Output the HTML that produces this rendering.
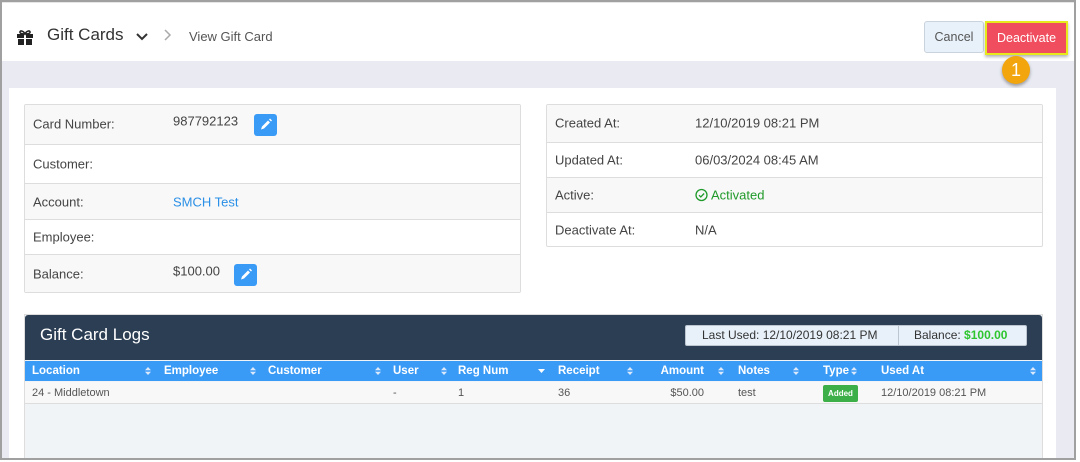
<!DOCTYPE html>
<html><head><meta charset="utf-8"><style>
*{box-sizing:border-box;margin:0;padding:0}
body{width:1080px;height:462px;overflow:hidden;background:#fff;font-family:"Liberation Sans",sans-serif;font-size:13px;color:#444;position:relative}
.frame{position:absolute;left:0;top:0;width:1076px;height:460px;border:2px solid #a0a0a0;background:#e9eaf2;overflow:hidden}
.hdr{position:absolute;left:0;top:0;width:1072px;height:59px;background:#fff;border-top:1px solid #e6e6e6}
.abs{position:absolute}
.panel{position:absolute;left:7px;top:86px;width:1047px;height:380px;background:#fff}
.tbl{position:absolute;border:1px solid #ddd;border-radius:2px;overflow:hidden}
.row{position:absolute;left:0;right:0;border-top:1px solid #ddd}
.row span{position:absolute;top:50%;transform:translateY(-50%)}
.th{position:absolute;top:0;height:20px;line-height:20px;color:#fff;font-weight:bold;font-size:11.5px}
.si{position:absolute;top:6px}
.td{position:absolute;top:0;height:22px;line-height:22px;font-size:11px;color:#555}
.pen{position:absolute;width:23px;height:22px;background:#3a9bf6;border-radius:3px}
</style></head><body>
<div class="frame">
<div class="hdr">
 <svg class="abs" style="left:14px;top:26px" width="18" height="16" viewBox="0 0 18 16"><rect x="1" y="5" width="16" height="4" fill="#222"/><rect x="2" y="10" width="14" height="6" fill="#222"/><rect x="8" y="5" width="2" height="11" fill="#fff"/><path d="M9 5C7 1 3.5 1.5 4 3.5 4.5 5 8 5 9 5 10 5 13.5 5 14 3.5 14.5 1.5 11 1 9 5Z" fill="none" stroke="#222" stroke-width="1.6"/></svg>
 <div class="abs" style="left:45px;top:22px;font-size:17px;color:#333">Gift Cards</div>
 <svg class="abs" style="left:134px;top:30px" width="12" height="8"><path d="M1 1l5 5 5-5" fill="none" stroke="#333" stroke-width="2"/></svg>
 <svg class="abs" style="left:162px;top:26px" width="8" height="12"><path d="M1 1l5 5-5 5" fill="none" stroke="#aaa" stroke-width="1.5"/></svg>
 <div class="abs" style="left:187px;top:26px;font-size:13px;color:#555">View Gift Card</div>
 <div class="abs" style="left:922px;top:18px;width:60px;height:32px;border:1px solid #c9d3dd;background:#e8f1fa;border-radius:3px;line-height:30px;text-align:center;color:#555;font-size:12.5px">Cancel</div>
 <div class="abs" style="left:983px;top:18px;width:83px;height:34px;border:2px solid #e6ea1c;background:#f04d5e;line-height:30px;text-align:center;color:#fff;font-size:12.5px;box-shadow:0 2px 3px rgba(0,0,0,.3)">Deactivate</div>
</div>
<div class="abs" style="left:1000px;top:54px;width:28px;height:28px;border-radius:50%;background:#f2a50c;color:#fff;font-size:18px;text-align:center;line-height:28px;box-shadow:0 2px 3px rgba(0,0,0,.35)">1</div>
<div class="panel"></div>
<div class="tbl" style="left:22px;top:102px;width:497px;height:189px">
 <div class="row" style="top:-1px;height:40px;background:#f8f8f8;border-top:none"><span style="left:8px">Card Number:</span><span style="left:148px;transform:translateY(-70%)">987792123</span><div class="pen" style="left:229px;top:10px"><svg width="23" height="22"><path d="M7 15.5l1-3 6-6 2 2-6 6z M15 5.5l1-1 2 2-1 1z" fill="#fff"/></svg></div></div>
 <div class="row" style="top:39px;height:39px"><span style="left:8px">Customer:</span></div>
 <div class="row" style="top:78px;height:36px;background:#f8f8f8"><span style="left:8px">Account:</span><span style="left:148px;color:#2a8fe6">SMCH Test</span></div>
 <div class="row" style="top:114px;height:35px"><span style="left:8px">Employee:</span></div>
 <div class="row" style="top:149px;height:38px;background:#f8f8f8"><span style="left:8px">Balance:</span><span style="left:148px;transform:translateY(-70%)">$100.00</span><div class="pen" style="left:209px;top:9px"><svg width="23" height="22"><path d="M7 15.5l1-3 6-6 2 2-6 6z M15 5.5l1-1 2 2-1 1z" fill="#fff"/></svg></div></div>
</div>
<div class="tbl" style="left:544px;top:102px;width:497px;height:143px">
 <div class="row" style="top:-1px;height:38px;background:#f8f8f8;border-top:none"><span style="left:8px">Created At:</span><span style="left:148px">12/10/2019 08:21 PM</span></div>
 <div class="row" style="top:37px;height:35px"><span style="left:8px">Updated At:</span><span style="left:148px">06/03/2024 08:45 AM</span></div>
 <div class="row" style="top:72px;height:35px;background:#f8f8f8"><span style="left:8px">Active:</span><span style="left:148px;height:13px"><svg width="13" height="13"><circle cx="6.5" cy="6.5" r="5.5" fill="none" stroke="#1f9a2a" stroke-width="1.3"/><path d="M4 6.7l1.8 1.8 3.3-3.5" fill="none" stroke="#1f9a2a" stroke-width="1.3"/></svg></span><span style="left:164px;color:#1f9a2a">Activated</span></div>
 <div class="row" style="top:107px;height:35px"><span style="left:8px">Deactivate At:</span><span style="left:148px">N/A</span></div>
</div>
<div class="abs" style="left:22px;top:312px;width:1019px;height:150px;background:#f1f4f7;border:1px solid #ddd">
 <div class="abs" style="left:0;top:0;width:1017px;height:45px;background:#2c3e54;border-radius:3px 3px 0 0"></div>
 <div class="abs" style="left:15px;top:10px;font-size:17px;color:#fff">Gift Card Logs</div>
 <div class="abs" style="left:660px;top:10px;width:342px;height:21px;background:#e8f1fa;border:1px solid #bcc6d0;border-radius:2px;font-size:12px;line-height:19px;color:#333">
  <span class="abs" style="left:16px">Last Used: 12/10/2019 08:21 PM</span>
  <span class="abs" style="left:212px;top:0;height:19px;border-left:1px solid #bcc6d0"></span>
  <span class="abs" style="left:228px">Balance: <b style="color:#2ec52e">$100.00</b></span>
 </div>
 <div class="abs" style="left:0;top:46px;width:1017px;height:20px;background:#3a9bf6">
  <div class="th" style="left:7px">Location</div>
  <div class="th" style="left:139px">Employee</div>
  <div class="th" style="left:243px">Customer</div>
  <div class="th" style="left:368px">User</div>
  <div class="th" style="left:433px">Reg Num</div>
  <div class="th" style="left:533px">Receipt</div>
  <div class="th" style="left:634px;width:45px;text-align:right">Amount</div>
  <div class="th" style="left:713px">Notes</div>
  <div class="th" style="left:798px">Type</div>
  <div class="th" style="left:856px">Used At</div>
  <svg class="si" style="left:120px" width="6" height="8"><path d="M0 3.3L3 0 6 3.3Z M0 4.7L3 8 6 4.7Z" fill="#dce9fb"/></svg>
  <svg class="si" style="left:225px" width="6" height="8"><path d="M0 3.3L3 0 6 3.3Z M0 4.7L3 8 6 4.7Z" fill="#dce9fb"/></svg>
  <svg class="si" style="left:350px" width="6" height="8"><path d="M0 3.3L3 0 6 3.3Z M0 4.7L3 8 6 4.7Z" fill="#dce9fb"/></svg>
  <svg class="si" style="left:416px" width="6" height="8"><path d="M0 3.3L3 0 6 3.3Z M0 4.7L3 8 6 4.7Z" fill="#dce9fb"/></svg>
  <svg class="si" style="left:513px;top:8px" width="7" height="5"><path d="M0 0L3.5 4 7 0Z" fill="#fff"/></svg>
  <svg class="si" style="left:602px" width="6" height="8"><path d="M0 3.3L3 0 6 3.3Z M0 4.7L3 8 6 4.7Z" fill="#dce9fb"/></svg>
  <svg class="si" style="left:693px" width="6" height="8"><path d="M0 3.3L3 0 6 3.3Z M0 4.7L3 8 6 4.7Z" fill="#dce9fb"/></svg>
  <svg class="si" style="left:768px" width="6" height="8"><path d="M0 3.3L3 0 6 3.3Z M0 4.7L3 8 6 4.7Z" fill="#dce9fb"/></svg>
  <svg class="si" style="left:826px" width="6" height="8"><path d="M0 3.3L3 0 6 3.3Z M0 4.7L3 8 6 4.7Z" fill="#dce9fb"/></svg>
  <svg class="si" style="left:1005px" width="6" height="8"><path d="M0 3.3L3 0 6 3.3Z M0 4.7L3 8 6 4.7Z" fill="#dce9fb"/></svg>
 </div>
 <div class="abs" style="left:0;top:67px;width:1017px;height:22px;background:#f8f8f8;border-bottom:1px solid #ddd">
  <div class="td" style="left:7px">24 - Middletown</div>
  <div class="td" style="left:368px">-</div>
  <div class="td" style="left:433px">1</div>
  <div class="td" style="left:533px">36</div>
  <div class="td" style="left:600px;width:79px;text-align:right">$50.00</div>
  <div class="td" style="left:713px">test</div>
  <div class="abs" style="left:798px;top:3px;width:35px;height:17px;background:#3daf48;border-radius:2px;color:#fff;font-size:8px;font-weight:bold;text-align:center;line-height:17px">Added</div>
  <div class="td" style="left:856px">12/10/2019 08:21 PM</div>
 </div>
</div>
</div>
</body></html>
